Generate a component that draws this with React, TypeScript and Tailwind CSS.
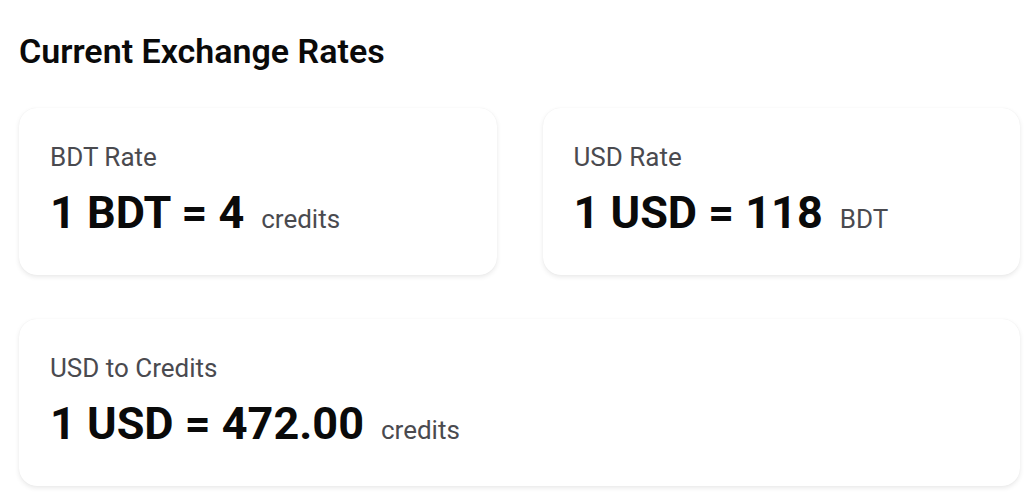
import React from "react";

function RateCard({ label, main, unit, className = "" }: { label: string; main: string; unit: string; className?: string }) {
  return (
    <div
      className={
        "rounded-[18px] bg-white px-[31px] pt-[31px] pb-[35px] shadow-[0_2px_5px_rgba(0,0,0,0.09),0_0_1px_rgba(0,0,0,0.07)] " +
        className
      }
    >
      <div className="text-[26px] leading-[36px] text-[#4a4a4f]">{label}</div>
      <div className="mt-[11px] flex items-baseline">
        <span className="text-[45px] leading-[54px] font-bold text-[#0a0a0a]">{main}</span>
        <span className="ml-[17px] text-[26px] text-[#4a4a4f]">{unit}</span>
      </div>
    </div>
  );
}

export default function App() {
  return (
    <div
      className="w-[1024px] h-[493px] overflow-hidden bg-white pl-[19px] pr-[4px] pt-[31px]"
      style={{ fontFamily: "Roboto, 'Noto Sans', sans-serif" }}
    >
      <h2 className="text-[34px] leading-[40px] font-semibold text-[#0a0a0a]">Current Exchange Rates</h2>
      <div className="mt-[37px] grid grid-cols-2 gap-x-[46px] gap-y-[44px]">
        <RateCard label="BDT Rate" main="1 BDT = 4" unit="credits" />
        <RateCard label="USD Rate" main="1 USD = 118" unit="BDT" />
        <RateCard label="USD to Credits" main="1 USD = 472.00" unit="credits" className="col-span-2" />
      </div>
    </div>
  );
}
